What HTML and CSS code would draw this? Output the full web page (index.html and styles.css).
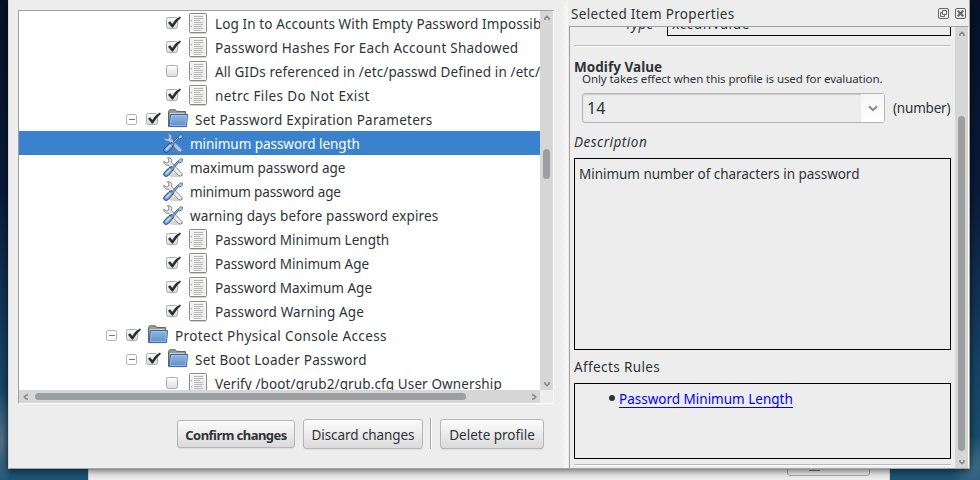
FILE: index.html
```
<!DOCTYPE html>
<html lang="en">
<head>
<meta charset="utf-8">
<title>Profile editor</title>
<link rel="stylesheet" href="styles.css">
</head>
<body>
<svg class="defs" width="0" height="0" aria-hidden="true">
  <defs>
    <linearGradient id="gb" x1="0" y1="0" x2="0" y2="1"><stop offset="0" stop-color="#fff"/><stop offset="1" stop-color="#ddd"/></linearGradient>
    <linearGradient id="gf" x1="0" y1="0" x2="0" y2="1"><stop offset="0" stop-color="#95b8e0"/><stop offset="1" stop-color="#5a8fcd"/></linearGradient>
    <symbol id="off" viewBox="0 0 16 16"><rect x=".5" y="2.500" width="11" height="11" rx="2" fill="url(#gb)" stroke="#aaa"/></symbol>
    <symbol id="on" viewBox="0 0 16 16"><rect x=".5" y="2.500" width="11" height="11" rx="2" fill="url(#gb)" stroke="#aaa"/><path d="M2 7.700 4.200 6.300 6.300 8.900Q9.200 4 13.800 1.500L15 2.700Q10 7 7 12.500H5.800Z" fill="#2a3032"/></symbol>
    <symbol id="minus" viewBox="0 0 11 11"><rect x=".5" y=".5" width="10" height="10" rx="1.5" fill="#fff" stroke="#b4b4b4"/><path d="M3 5.5h6" stroke="#777"/></symbol>
    <symbol id="file" viewBox="0 0 18 21"><path d="M1 20.3h16" stroke="#ccc8c0"/><rect x=".5" y=".5" width="17" height="19" rx=".8" fill="#fff" stroke="#858783"/><rect x="2" y="2" width="14" height="16" fill="#eee"/><path d="M5 3.5h9M5 5.5h9M5 7.5h6M5 9.5h9M5 11.5h9M5 13.5h8M5 15.5h9M5 17.5h7" stroke="#bbb"/><path d="M2 7.5h1M2 13.5h1" stroke="#999"/></symbol>
    <symbol id="folder" viewBox="0 0 20 19"><path d="M.5 17.5V2.5L1.5.8h6l1 1.7H17.5v5H4Z" fill="#999b97" stroke="#666864"/><path d="M2 4h14.500v3H4L2 14Z" fill="#d0d1ce"/><path d="M2.600 5.500H19.500L18.500 17.600H1Z" fill="url(#gf)" stroke="#3465a4"/><path d="M3.700 6.500H18.400L17.600 16.500H2.300Z" fill="none" stroke="#aac6e8" stroke-width=".7"/></symbol>
    <symbol id="tools" viewBox="0 0 20 20"><ellipse cx="13" cy="18" rx="7" ry="1.500" fill="#888" opacity=".35"/><path class="wrench" d="M4.500.7Q7.800 0 8.800 3.200L8.500 5.800 19 16.500Q19.800 18.500 17.500 19L15.500 18.500 5.800 8.200Q1.500 9 .7 4.200L3.300 6 5.600 5.200 6 3Z" stroke-width=".9"/><path d="m10.500 10 5-5.500" stroke="#315c91" stroke-width="2.400"/><path d="m10.500 10 5-5.500" stroke="#dbe6f1" stroke-width=".8"/><path d="m15 4.200 2.500-2.300 2 .2-.3 2.400-2.700 1.600Z" fill="#b5cbe3" stroke="#315c91" stroke-width=".8"/><path d="M9 9.500 11 11.500Q9.500 13 9 14.500L5.200 18.600Q2.800 20.400 1.200 18.700T1.700 15L6 10.700Q7.800 10.500 9 9.500Z" fill="#7b9fcb" stroke="#204a87"/><path d="m3 17 4.500-4.700" stroke="#c9daec" stroke-width="1.500"/></symbol>
    <symbol id="arr" viewBox="0 0 6 6"><path d="M1 5V3.300L3 1.300 5 3.300V5" fill="none" stroke="#858585" stroke-width="1.600"/></symbol>
  </defs>
</svg>
<div class="behind"><div class="behind-btn"></div></div>
<div class="window">
  <section class="left">
    <div class="tree">
      <div class="rows">
        <div class="row rule"><svg class="cb"><use href="#on"/></svg><svg class="file"><use href="#file"/></svg><span>Log In to Accounts With Empty Password Impossible</span></div>
        <div class="row rule loose"><svg class="cb"><use href="#on"/></svg><svg class="file"><use href="#file"/></svg><span>Password Hashes For Each Account Shadowed</span></div>
        <div class="row rule"><svg class="cb"><use href="#off"/></svg><svg class="file"><use href="#file"/></svg><span>All GIDs referenced in /etc/passwd Defined in /etc/group</span></div>
        <div class="row rule wide"><svg class="cb"><use href="#on"/></svg><svg class="file"><use href="#file"/></svg><span>netrc Files Do Not Exist</span></div>
        <div class="row group inner loose"><svg class="minus"><use href="#minus"/></svg><svg class="cb"><use href="#on"/></svg><svg class="folder"><use href="#folder"/></svg><span>Set Password Expiration Parameters</span></div>
        <div class="row value selected tight"><svg class="tools"><use href="#tools"/></svg><span>minimum password length</span></div>
        <div class="row value tight"><svg class="tools"><use href="#tools"/></svg><span>maximum password age</span></div>
        <div class="row value tighter"><svg class="tools"><use href="#tools"/></svg><span>minimum password age</span></div>
        <div class="row value"><svg class="tools"><use href="#tools"/></svg><span>warning days before password expires</span></div>
        <div class="row rule snug"><svg class="cb"><use href="#on"/></svg><svg class="file"><use href="#file"/></svg><span>Password Minimum Length</span></div>
        <div class="row rule snug"><svg class="cb"><use href="#on"/></svg><svg class="file"><use href="#file"/></svg><span>Password Minimum Age</span></div>
        <div class="row rule snug"><svg class="cb"><use href="#on"/></svg><svg class="file"><use href="#file"/></svg><span>Password Maximum Age</span></div>
        <div class="row rule"><svg class="cb"><use href="#on"/></svg><svg class="file"><use href="#file"/></svg><span>Password Warning Age</span></div>
        <div class="row group wide"><svg class="minus"><use href="#minus"/></svg><svg class="cb"><use href="#on"/></svg><svg class="folder"><use href="#folder"/></svg><span>Protect Physical Console Access</span></div>
        <div class="row group inner loose"><svg class="minus"><use href="#minus"/></svg><svg class="cb"><use href="#on"/></svg><svg class="folder"><use href="#folder"/></svg><span>Set Boot Loader Password</span></div>
        <div class="row rule"><svg class="cb"><use href="#off"/></svg><svg class="file"><use href="#file"/></svg><span>Verify /boot/grub2/grub.cfg User Ownership</span></div>
      </div>
      <div class="vbar"><svg class="arr"><use href="#arr"/></svg><i class="thumb"></i><svg class="arr down"><use href="#arr"/></svg></div>
      <div class="hbar"><svg class="arr west"><use href="#arr"/></svg><i class="thumb"></i><svg class="arr east"><use href="#arr"/></svg></div>
    </div>
    <div class="actions">
      <button class="default">Confirm changes</button>
      <button class="discard">Discard changes</button>
      <i class="sep"></i>
      <button class="delete">Delete profile</button>
    </div>
  </section>
  <div class="splitter"></div>
  <section class="dock">
    <header><span>Selected Item Properties</span>
      <svg width="11" height="11" viewBox="0 0 11 11" fill="none" stroke="#666864"><rect x=".5" y=".5" width="10" height="10" rx="1.500"/><path d="M4.500 2.500h4v4h-4zM4.500 4.500h-2v4h4v-2"/></svg>
      <svg width="11" height="11" viewBox="0 0 11 11" fill="none" stroke="#666864"><rect x=".5" y=".5" width="10" height="10" rx="1.500"/><path d="m2.700 2.700 5.600 5.600M8.300 2.700 2.700 8.300" stroke-width="2"/></svg>
    </header>
    <div class="scroll">
      <div class="props">
        <div class="type"><em>Type</em><div class="field">xccdf:Value</div></div>
        <hr>
        <h2>Modify Value</h2>
        <p class="note">Only takes effect when this profile is used for evaluation.</p>
        <div class="edit"><div class="combo"><span>14</span><div class="drop"><svg width="10" height="7" viewBox="0 0 10 7"><path d="m1 1.200 4 4 4-4" fill="none" stroke="#888" stroke-width="2"/></svg></div></div><span class="unit">(number)</span></div>
        <em class="desc-label">Description</em>
        <div class="box desc">Minimum number of characters in password</div>
        <div class="affects-label">Affects Rules</div>
        <div class="box affects"><i class="bullet"></i><a>Password Minimum Length</a></div>
        <hr class="last">
      </div>
      <div class="vbar side"><svg class="arr"><use href="#arr"/></svg><i class="thumb"></i><svg class="arr down"><use href="#arr"/></svg></div>
    </div>
  </section>
</div>
</body>
</html>
```
FILE: styles.css
```
* { box-sizing: border-box; }
body {
  margin: 0; width: 980px; height: 480px; overflow: hidden; position: relative;
  font: 13.5px/24px "Noto Sans", "Open Sans", sans-serif; color: #2e3436;
  background: radial-gradient(ellipse 12px 50px at 2px 440px, #55728a, transparent), radial-gradient(ellipse 22px 30px at 972px 465px, #42708a, transparent), linear-gradient(#061129 0, #0a1b3a 40%, #174266 75%, #1b5573 100%);
}
.defs { position: absolute; }
svg { display: block; flex: none; }
.window {
  position: absolute; left: 8px; top: 0; width: 962px; height: 469px; display: flex;
  background: #ededed; border: 1px solid #a3a3a3; border-left-color: #d5d5d5; border-top: 0; box-shadow: 0 1px 8px rgba(0,0,0,.7);
}
.behind { position: absolute; left: 88px; top: 460px; width: 802px; height: 20px; background: #ededed; border: 1px solid #d0d0d0; border-width: 0 1px; }
.behind-btn { margin: 0 0 0 698px; width: 83px; height: 16px; border: 1px solid #aaa; border-radius: 3px; background: linear-gradient(90deg, transparent 21px, #777 21px, #777 32px, transparent 32px) 0 9px / 100% 1px no-repeat; }
.left { width: 554px; padding: 10px 9px 0; flex: none; }
.tree {
  width: 536px; height: 394px; display: grid; grid-template: 379px 13px / 521px 13px;
  border: 1px solid #fff; border-top-color: #a0a0a0; border-left-color: #a0a0a0;
}
.rows { background: #fff; overflow: hidden; }
.row { height: 24px; display: flex; align-items: flex-start; white-space: nowrap; letter-spacing: .12px; padding-top: 1px; }
.row.rule { padding-left: 147px; }
.row.group { padding-left: 87px; }
.row.inner { padding-left: 107px; }
.row.value { padding-left: 144px; }
.wide { letter-spacing: .39px; }
.loose { letter-spacing: .25px; }
.snug { letter-spacing: .02px; }
.tight { letter-spacing: -.04px; }
.tighter { letter-spacing: -.12px; }
.selected { background: #3a82ce; color: #fff; }
.tools { fill: #eeeeec; stroke: #777975; }
.selected .tools { fill: #a9c6e6; stroke: #5c7ea6; }
.tools { width: 20px; height: 20px; margin: 1px 7px 0 0; }
.cb { width: 16px; height: 16px; margin-top: 3px; }
.file { width: 18px; height: 21px; margin: 1px 8px 0 7px; }
.minus { width: 11px; height: 11px; margin: 6px 9px 0 0; }
.folder { width: 20px; height: 19px; margin: 1px 7px 0 6px; }
.vbar, .hbar { background: #d6d6d6; display: flex; align-items: center; }
.vbar { flex-direction: column; }
.vbar .thumb { width: 7px; height: 30px; border-radius: 4px; background: #9d9e9f; margin-top: 128px; }
.arr { width: 6px; height: 6px; }
.vbar .arr:first-child { margin-top: 4px; }
.vbar .down { margin-top: auto; margin-bottom: 3px; }
.down { transform: rotate(180deg); }
.west { transform: rotate(-90deg); margin-left: 4px; }
.east { transform: rotate(90deg); margin: 0 3px 0 auto; }
.hbar .thumb { width: 431px; height: 7px; border-radius: 4px; background: #9d9e9f; margin-left: 6px; }
.actions { display: flex; align-items: center; padding: 14px 0 0 159px; }
button {
  font: inherit; color: inherit; height: 30px; padding: 0; text-align: center; white-space: nowrap; line-height: 30px;
  border: 1px solid #b5b7b5; border-radius: 3px; background: linear-gradient(#fbfbfb, #ededed 45%, #dadada); box-shadow: 0 1px rgba(0,0,0,.06); letter-spacing: 0;
}
.default { width: 118px; height: 28px; font-size: 13px; font-weight: bold; line-height: 28px; letter-spacing: -.55px; }
.discard { width: 120px; margin-left: 8px; letter-spacing: -.08px; }
.sep { width: 2px; height: 31px; background: #fff; border-left: 1px solid #aaa; margin: 0 8px 0 7px; }
.delete { width: 104px; }
.splitter { width: 4px; margin: 2px 2px 0 1px; background: conic-gradient(#fff 25%, transparent 0 50%, #fff 0 75%, transparent 0) 0 0 / 2px 2px; }
.dock { width: 400px; margin-left: -1px; flex: none; }
header { height: 26px; display: flex; align-items: center; padding: 1px 3px 0 2px; gap: 6px; }
header span { margin-right: auto; letter-spacing: .33px; padding-top: 1px; }
.scroll { height: 442px; display: flex; border-top: 1px solid #a0a0a0; border-left: 1px solid #a0a0a0; border-right: 1px solid #fff; }
.props { width: 385px; padding: 0 4px; overflow: hidden; flex: none; }
.type { height: 9px; display: flex; overflow: hidden; }
.type em { width: 93px; padding-left: 51px; margin-top: -15px; flex: none; letter-spacing: .3px; }
.field { width: 284px; height: 30px; margin-top: -21px; padding: 3px 4px; border: 1px solid #000; line-height: 28px; letter-spacing: .6px; }
hr { width: 377px; height: 2px; margin: 9px 0 0; border: 0; background: #fff; border-top: 1px solid #bbb; }
h2 { margin: 12px 0 0; font-size: 13.5px; line-height: 17px; height: 12px; letter-spacing: .05px; }
.note { margin: 0 0 0 8px; font-size: 11.5px; line-height: 16px; height: 21px; letter-spacing: -.08px; white-space: nowrap; }
.edit { display: flex; align-items: center; margin: 1px 0 0 8px; }
.combo { width: 303px; height: 30px; display: flex; justify-content: space-between; border: 1px solid #b4b5b4; border-radius: 3px; padding-left: 4px; font-size: 16px; line-height: 28px; box-shadow: inset 0 1px 1px #ccc; }
.drop { width: 23px; background: linear-gradient(#f5f5f5, #fff); display: flex; align-items: center; justify-content: center; }
.unit { margin-left: 8px; letter-spacing: -.2px; white-space: nowrap; }
.desc-label { display: block; margin-top: 7px; height: 28px; letter-spacing: .5px; }
.box { width: 377px; border: 1px solid #000; }
.desc { height: 192px; padding: 3px 4px; letter-spacing: -.03px; }
.affects-label { height: 33px; padding-top: 5px; letter-spacing: .38px; }
.affects { height: 76px; padding: 5px 0 0 34px; display: flex; align-items: flex-start; }
.bullet { width: 6px; height: 6px; border-radius: 50%; background: #2e3436; margin: 6px 4px 0 0; }
.affects a { color: #00f; border-bottom: 1px solid #00f; height: 19px; line-height: 20px; letter-spacing: 0; }
.last { margin-top: 5px; }
.side { width: 13px; }
.side .thumb { height: 335px; margin-top: 79px; }
```
